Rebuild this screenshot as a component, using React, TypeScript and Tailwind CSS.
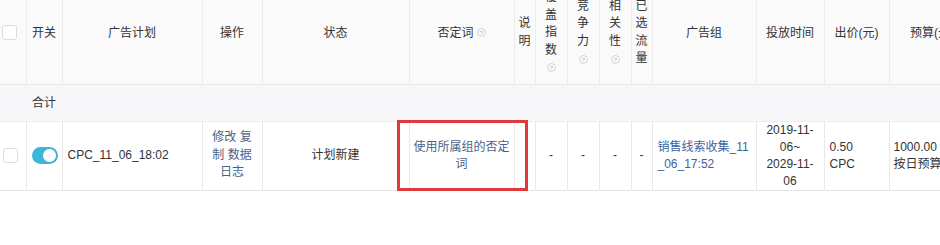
import React from "react";

const Q = () => (
  <svg width="9" height="9" viewBox="0 0 10 10" className="inline-block align-middle">
    <circle cx="5" cy="5" r="4.4" fill="none" stroke="#c4c4c4" strokeWidth="0.8" />
    <text x="5" y="7.3" textAnchor="middle" fontSize="6.5" fill="#b0b0b0" fontFamily="Liberation Sans, sans-serif">?</text>
  </svg>
);

const Vert = ({ chars, q }: { chars: string; q?: boolean }) => (
  <div className="flex flex-col items-center leading-[17.5px]">
    {chars.split("").map((c, i) => (
      <span key={i}>{c}</span>
    ))}
    {q && (
      <span className="h-[17.5px] flex items-center">
        <Q />
      </span>
    )}
  </div>
);

const Box = () => (
  <div className="w-[15px] h-[15px] border border-[#dcdcdc] rounded-[3px] bg-white" />
);

export default function App() {
  const widths = [26, 36, 140, 60, 147, 105, 21, 32, 32, 32, 21, 104, 68, 65, 86];
  const th = "border-r border-[#ececec] text-center align-middle font-normal p-0";
  const td = "border-r border-[#e8e8e8] align-middle p-0";
  return (
    <div
      className="relative w-[940px] h-[245px] overflow-hidden bg-white text-[12px] text-[#333]"
      style={{ fontFamily: '"Liberation Sans", "Noto Sans CJK SC", sans-serif' }}
    >
      <table className="mt-[-18px] table-fixed border-collapse w-[975px]">
        <colgroup>
          {widths.map((w, i) => (
            <col key={i} style={{ width: w }} />
          ))}
        </colgroup>
        <thead>
          <tr className="h-[102px] bg-[#fafafb] border-b border-[#e8e8e8]">
            <th className={th}>
              <div className="flex justify-start pl-[2px] pt-[0px]">
                <Box />
              </div>
            </th>
            <th className={th}>开关</th>
            <th className={th}>广告计划</th>
            <th className={th}>操作</th>
            <th className={th}>状态</th>
            <th className={th}>
              <span className="inline-flex items-center gap-[3px]">
                否定词 <Q />
              </span>
            </th>
            <th className={th}>
              <Vert chars="说明" />
            </th>
            <th className={th}>
              <Vert chars="覆盖指数" q />
            </th>
            <th className={th}>
              <Vert chars="竞争力" q />
            </th>
            <th className={th}>
              <Vert chars="相关性" q />
            </th>
            <th className={th}>
              <Vert chars="已选流量" />
            </th>
            <th className={th}>广告组</th>
            <th className={th}>投放时间</th>
            <th className={th}>出价(元)</th>
            <th className={th}>预算(元)</th>
          </tr>
        </thead>
        <tbody>
          <tr className="h-[37px] bg-[#f7f7f9] border-b border-[#ededed]">
            <td className="p-0"></td>
            <td className="p-0 pl-[6px] align-middle" colSpan={14}>
              合计
            </td>
          </tr>
          <tr className="h-[69px] bg-white border-b border-[#e6e6e6] leading-[17px]">
            <td className={td}>
              <div className="pl-[3px]">
                <Box />
              </div>
            </td>
            <td className={td}>
              <div className="pl-[5px]">
                <div className="w-[26px] h-[17px] rounded-full bg-[#3db6d8] flex items-center justify-end pr-[2px]">
                  <div className="w-[13px] h-[13px] rounded-full bg-white" />
                </div>
              </div>
            </td>
            <td className={td + " pl-[5px]"}>CPC_11_06_18:02</td>
            <td className={td + " text-center text-[#4c5f86] leading-[17.5px]"}>
              修改 复<br />制 数据<br />日志
            </td>
            <td className={td + " text-center"}>计划新建</td>
            <td className={td + " text-center text-[#4c5f86]"}>
              使用所属组的否定<br />词
            </td>
            <td className={td}></td>
            <td className={td + " text-center"}>-</td>
            <td className={td + " text-center"}>-</td>
            <td className={td + " text-center"}>-</td>
            <td className={td + " text-center"}>-</td>
            <td className={td + " pl-[5px] text-[#43639a]"}>
              销售线索收集_11<br />_06_17:52
            </td>
            <td className={td + " text-center"}>
              2019-11-<br />06~<br />2029-11-<br />06
            </td>
            <td className={td + " pl-[5px]"}>
              0.50<br />CPC
            </td>
            <td className={td + " pl-[4px] whitespace-nowrap"}>
              1000.00<br />按日预算
            </td>
          </tr>
        </tbody>
      </table>
      <div className="absolute left-[397px] top-[120px] w-[131px] h-[71px] border-[3px] border-[#e0393b]" />
    </div>
  );
}
